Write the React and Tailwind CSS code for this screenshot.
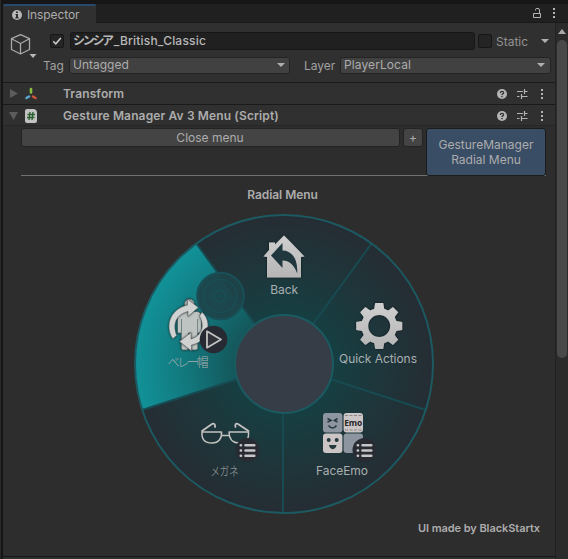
import React from "react";

function Dots() {
  return (
    <svg className="h-3 w-1 shrink-0" viewBox="0 0 4 12" fill="#b4b4b4">
      <rect x="1" y="1" width="2" height="2" />
      <rect x="1" y="5" width="2" height="2" />
      <rect x="1" y="9" width="2" height="2" />
    </svg>
  );
}

function Caret() {
  return (
    <svg className="h-1 w-2 shrink-0" viewBox="0 0 8 4">
      <path d="M0 0H8L4 4Z" fill="#b0b0b0" />
    </svg>
  );
}

function RowTools() {
  return (
    <div className="ml-auto flex items-center pr-[11px]">
      <svg className="size-[10px]" viewBox="0 0 10 10">
        <circle cx="5" cy="5" r="5" fill="#b4b4b4" />
        <path d="M3.4 3.9C3.4 1.9 6.6 1.9 6.6 3.8C6.6 4.9 5 4.8 5 6" fill="none" stroke="#303030" strokeWidth="1.3" />
        <rect x="4.3" y="6.9" width="1.4" height="1.3" fill="#303030" />
      </svg>
      <svg className="ml-[10px] h-[10px] w-[11px]" viewBox="0 0 11 10" fill="none" stroke="#b4b4b4" strokeWidth="1.2">
        <path d="M0 2.5H6M7.5 2.5H10.5M7.5 0V5M0 7.5H2.500M4.500 7.500H10.500M4.500 5V10" />
      </svg>
      <div className="ml-[12px] flex">
        <Dots />
      </div>
    </div>
  );
}

function Radial() {
  return (
    <svg
      className="ml-[130px] block h-[302px] w-[302px]"
      viewBox="133 213 302 302"
      fontFamily='Inter, "Noto Sans CJK JP", sans-serif'
    >
      <defs>
        <radialGradient id="base" gradientUnits="userSpaceOnUse" cx="284" cy="364" r="149">
          <stop offset="0.33" stopColor="#163f42" />
          <stop offset="0.65" stopColor="#1e363b" />
          <stop offset="1" stopColor="#252d33" />
        </radialGradient>
        <radialGradient id="selected" gradientUnits="userSpaceOnUse" cx="284" cy="364" r="149">
          <stop offset="0.33" stopColor="#14575b" />
          <stop offset="0.65" stopColor="#12777c" />
          <stop offset="1" stopColor="#119298" />
        </radialGradient>
        <linearGradient id="metal" x1="0" y1="0" x2="0" y2="1">
          <stop offset="0" stopColor="#d0d0d0" />
          <stop offset="1" stopColor="#b5b5b5" />
        </linearGradient>
        <filter id="shade" x="-20%" y="-20%" width="140%" height="140%">
          <feDropShadow dx="0" dy="0" stdDeviation="1" floodColor="#000" floodOpacity="0.7" />
        </filter>
      </defs>

      <circle cx="284" cy="364" r="149" fill="url(#base)" />
      <path d="M284 364L142.3 410A149 149 0 0 1 196.4 243.5Z" fill="url(#selected)" />
      <g stroke="#174a51" strokeWidth="2">
        <path d="M284 364L371.6 243.5M284 364L425.7 410M283 364V513M284 364L142.3 410M284 364L196.4 243.5" />
      </g>
      <circle cx="284" cy="364" r="149" fill="none" stroke="#1c5961" strokeWidth="2" />
      <circle cx="284" cy="364" r="49" fill="#373d46" stroke="#1a5b62" strokeWidth="2" />

      <g fill="none" stroke="#195058" strokeWidth="2">
        <circle cx="220.5" cy="296" r="23.3" fill="#1d4349" fillOpacity="0.92" />
        <circle cx="220" cy="296" r="16.5" strokeWidth="1.6" strokeOpacity="0.7" />
        <circle cx="219.5" cy="296" r="6" strokeWidth="1.6" />
        <circle cx="219.5" cy="296" r="2.2" fill="#174b51" stroke="none" />
      </g>

      <g filter="url(#shade)">
        <path d="M284 235.5L291 242.5L304.5 256.5L301 257V277.5H267V257L263.5 256.5L269 250V242.5H275V244.5Z" fill="url(#metal)" />
      </g>
      <path d="M271 255.5L282.5 243V250.5C292 250.5 298 259 297.2 273.500C294 264.5 289 260.5 282.5 260.5V268Z" fill="#20383d" />

      <g filter="url(#shade)" transform="translate(379.2 326)">
        <path
          fillRule="evenodd"
          fill="url(#metal)"
          d="M-4 -23H4L5 -17.2L9 -15.5L13.8 -19L19 -13.8L15.5 -9L17.2 -5L23 -4V4L17.2 5L15.5 9L19 13.8L13.8 19L9 15.5L5 17.2L4 23H-4L-5 17.2L-9 15.5L-13.8 19L-19 13.8L-15.5 9L-17.2 5L-23 4V-4L-17.2 -5L-15.5 -9L-19 -13.8L-13.8 -19L-9 -15.5L-5 -17.2ZM0 -11A11 11 0 1 0 0 11A11 11 0 1 0 0 -11Z"
        />
      </g>

      <g strokeLinejoin="round">
        <g filter="url(#shade)" fill="#bdc4c1" stroke="#40585a" strokeWidth="0.7">
          <circle cx="189.500" cy="304" r="5" />
          <path d="M182 311.500H197Q201.500 312 201.500 317V333H197.800V348Q197.800 350 195.500 350H192.500Q190.500 350 190.500 348V333H188.500V348Q188.500 350 186.500 350H183.500Q181.300 350 181.300 348V333H177.500V317Q177.500 312 182 311.500Z" />
        </g>
        <path d="M181.500 319V333M197.600 319V333" stroke="#61716f" strokeWidth="0.8" />
        <g filter="url(#shade)" fill="#d0d1d1" stroke="#454d50" strokeWidth="0.5">
          <path d="M187.500 299L198.300 307.500L188 316.500V311.500C178 314 171.500 322 176.700 335.500L172.800 338.800C165 327 169 309.500 187.500 305Z" />
          <path d="M202 312C208.500 318 210.500 328 204 337C200.500 342 196.500 344 191.500 345V351L179.500 341.500L191 332.500V339C200 336.500 206 328 199.500 316Z" />
        </g>
      </g>
      <circle cx="213.500" cy="339.500" r="13.800" fill="#272a32" />
      <path d="M207 331.300V347.700L221 339.500Z" fill="#303139" stroke="#c3c3c3" strokeWidth="1.800" strokeLinejoin="round" />

      <g fill="none" stroke="#c4c2c0" strokeWidth="2" strokeLinecap="round" strokeLinejoin="round">
        <path d="M202 432H221.500C222 438 219 443 212 443C205 443 201.500 440 202 432ZM229 432H248.500C249 440 246 443 239 443C232 443 229 438 229 432ZM222 435.500H229" strokeWidth="1.500" />
        <path d="M202 431L212 424C214 423 215.500 424.500 215 427M248.500 431L238 424C236 423 234.700 424.500 235.500 427" strokeWidth="1.800" />
      </g>

      <rect x="323" y="413" width="19.400" height="19.400" rx="3" fill="#8c95a0" />
      <rect x="343.600" y="413" width="19.400" height="19.400" rx="3" fill="#cbc6c5" />
      <rect x="323" y="433.500" width="19.400" height="19.400" rx="3" fill="#cbc6c5" />
      <rect x="343.600" y="433.500" width="19.400" height="19.400" rx="3" fill="#8c95a0" />
      <path d="M327.500 418.500L331 420.500L327.500 422M337.500 418.500L334.500 420.500L337.500 422M328.500 425.500Q332.500 430.500 336.500 425.500" fill="none" stroke="#283940" strokeWidth="1.600" />
      <circle cx="328.700" cy="440" r="2" fill="#25383b" />
      <circle cx="336.700" cy="440" r="2" fill="#25383b" />
      <path d="M329 445H336.500C336 450.500 329.500 450.500 329 445Z" fill="#25383b" />
      <path d="M345 415.500H362M345 430H362" stroke="#77777a" strokeWidth="0.800" strokeDasharray="3 1.500" />
      <text x="353.300" y="426" textAnchor="middle" fontSize="8.500" fontWeight="700" fill="#252525" fontFamily='"Open Sans", sans-serif' textLength="18">Emo</text>

      {[[247.500, 450], [364.500, 450]].map(([x, y]) => (
        <g key={x} transform={`translate(${x} ${y})`}>
          <circle r="12" fill="#292b33" />
          <g stroke="#c6c5c7" strokeWidth="2.600" strokeLinecap="round">
            <path d="M-6.700 -4.700H-6.500M-2 -4.700H6.800M-6.700 0.500H-6.500M-2 0.500H6.800M-6.700 5.800H-6.500M-2 5.800H6.800" />
          </g>
        </g>
      ))}

      <g fill="#a9afb0" fontSize="12" textAnchor="middle">
        <text x="284.200" y="294">Back</text>
        <text x="378" y="363" textLength="78">Quick Actions</text>
        <text x="342" y="475" textLength="52">FaceEmo</text>
        <text x="188" y="367" textLength="41" fontWeight="300">ベレー帽</text>
        <text x="224.500" y="476" textLength="28" lengthAdjust="spacingAndGlyphs" fontWeight="300">メガネ</text>
      </g>
    </svg>
  );
}

export default function App() {
  return (
    <div className="flex h-[559px] w-[568px] overflow-hidden border-l border-[#292929] bg-[#161616] pl-[2px] pt-1 font-['Inter','Noto_Sans_CJK_JP',sans-serif] text-xs leading-4 text-[#acacac]">
      <div className="flex min-w-0 flex-1 flex-col">
        <div className="flex h-[19px] shrink-0 bg-[#202020]">
          <div className="flex w-[93px] items-center rounded-t-[2px] border-t-2 border-[#27496d] bg-[#303030] pl-[9px]">
            <svg className="size-[10px]" viewBox="0 0 10 10">
              <circle cx="5" cy="5" r="5" fill="#b8b8b8" />
              <path d="M4 1.500H6V3H4ZM3.500 4H6V7.300H6.700V8.500H3.300V7.300H4V5H3.500Z" fill="#303030" />
            </svg>
            <span className="ml-[5px] tracking-[-0.1px]">Inspector</span>
          </div>
          <div className="flex flex-1 items-center border-b border-[#191919] pr-3">
            <svg className="ml-auto h-[10px] w-[9px]" viewBox="0 0 9 10" fill="none" stroke="#b4b4b4">
              <path d="M0.500 5.500H7.500V9.500H0.500ZM2.500 2.500V1.500Q2.500 0.500 4 0.500H5Q6.500 0.500 6.500 2V5" />
            </svg>
            <div className="ml-[10px] flex"><Dots /></div>
          </div>
        </div>

        <div className="flex min-h-0 flex-1">
          <div className="flex w-[552px] shrink-0 flex-col bg-[#2d2d2d]">
            <div className="flex h-[60px] shrink-0 border-b border-[#1a1a1a] bg-[#303030]">
              <svg className="ml-[7px] mt-[11px] h-[25px] w-[27px] shrink-0" viewBox="0 0 27 25" fill="none" stroke="#a9a9a9" strokeWidth="1.300" strokeLinejoin="round">
                <path d="M10.500 0.700L19.500 4.700V15.500L10.500 20L1.500 15.500V4.700ZM1.500 4.700L10.500 9.500L19.500 4.700M10.500 9.500V20" />
                <path d="M19.500 20H26.500L23 24Z" fill="#b8b8b8" stroke="none" />
              </svg>
              <div className="ml-[6px] flex flex-1 flex-col pt-[9px]">
                <div className="flex h-[18px] items-center">
                  <div className="ml-[7px] flex size-[14px] items-center justify-center rounded-[2px] border border-[#171717] bg-[#252525]">
                    <svg className="size-[10px]" viewBox="0 0 10 10"><path d="M1.200 5.300L3.800 7.800L8.800 2" fill="none" stroke="#cecece" strokeWidth="1.500" /></svg>
                  </div>
                  <div className="ml-[6px] flex h-[18px] w-[405px] items-center rounded-[3px] border border-[#171717] bg-[#202020] pl-[2px] font-medium text-[#b8b8b8]">
                    <span className="text-[12px] font-bold tracking-[-2.3px]">シンシア</span>
                    <span className="ml-[2px] tracking-[0.2px]">_British_Classic</span>
                  </div>
                  <div className="ml-[3px] size-[14px] rounded-[2px] border border-[#171717] bg-[#242424]" />
                  <span className="ml-1 mt-px w-[45px] text-[#929292]">Static</span>
                  <Caret />
                </div>
                <div className="mt-[6px] flex h-[18px] items-center">
                  <span className="mt-[2px] w-[26px] text-[#a0a0a0]">Tag</span>
                  <div className="flex h-[17px] w-[221px] items-center justify-between rounded-[3px] border border-[#242424] bg-[#414141] pl-[3px] pr-1"><span>Untagged</span><Caret /></div>
                  <span className="ml-[14px] mt-[2px] w-[36px] text-[#a0a0a0]">Layer</span>
                  <div className="flex h-[17px] w-[211px] items-center justify-between rounded-[3px] border border-[#242424] bg-[#414141] pl-[3px] pr-[5px]"><span className="tracking-[0.1px]">PlayerLocal</span><Caret /></div>
                </div>
              </div>
            </div>

            <div className="flex h-[22px] shrink-0 items-center border-b border-[#1a1a1a] bg-[#303030] pl-[7px]">
              <svg className="h-[9px] w-2" viewBox="0 0 8 9"><path d="M0 0L8 4.500L0 9Z" fill="#5c5c5c" /></svg>
              <svg className="ml-[6px] size-[14px]" viewBox="0 0 14 14" fill="none" strokeLinecap="round" strokeWidth="2.600">
                <path d="M7 2V5.500" stroke="#87bd3c" /><path d="M2.500 11L5 9.500" stroke="#5aa6d1" /><path d="M9 9.500L11.500 11" stroke="#cc5637" />
              </svg>
              <span className="ml-[25px] font-semibold tracking-[0.130px]">Transform</span>
              <RowTools />
            </div>
            <div className="flex h-[21px] shrink-0 items-center border-b border-[#262626] bg-[#303030] pl-[6px] pt-px">
              <svg className="h-2 w-[9px]" viewBox="0 0 9 8"><path d="M0 0H9L4.500 8Z" fill="#5c5c5c" /></svg>
              <div className="ml-[7px] flex h-[14px] w-3 items-center justify-center rounded-[2px] rounded-tr-[4px] bg-[#c2c2c2]">
                <svg className="size-2" viewBox="0 0 8 8"><path d="M3 0L2 8M6 0L5 8M0.500 2.500H8M0 5.500H7.500" fill="none" stroke="#255d2d" strokeWidth="1.300" /></svg>
              </div>
              <span className="ml-[26px] mt-px font-semibold tracking-[0.130px]">Gesture Manager Av 3 Menu (Script)</span>
              <RowTools />
            </div>

            <div className="flex h-[431px] shrink-0 flex-col border-b border-[#181818]">
              <div className="ml-[18px] flex h-[50px] w-[525px] border-b border-[#707070] pt-[2px]">
                <div className="h-[19px] w-[379px] rounded-[3px] border border-[#232323] bg-[#444] text-center leading-[18px]"><span className="-ml-px">Close menu</span></div>
                <div className="ml-[3px] h-[19px] w-[20px] rounded-[3px] border border-[#232323] bg-[#444] text-center leading-[18px]">+</div>
                <div className="ml-[3px] flex h-[48px] w-[120px] items-center justify-center rounded-[3px] border border-[#1b1b1b] bg-[#394d65] text-center leading-[15px]"><span>GestureManager<br />Radial Menu</span></div>
              </div>
              <div className="mb-[10px] mt-[11px] w-[559px] text-center font-semibold tracking-[-0.05px]">Radial Menu</div>
              <Radial />
              <div className="mr-[15px] mt-[5px] text-right text-[11px] font-semibold tracking-[-0.06px]">UI made by BlackStartx</div>
            </div>
            <div className="flex-1 bg-[#303030]" />
          </div>
          <div className="flex flex-1 flex-col items-center border-l border-[#222] bg-[#2b2b2b] pt-[6px]">
            <svg className="h-[5px] w-2" viewBox="0 0 8 5"><path d="M0 5H8L4 0Z" fill="#a9a9a9" /></svg>
            <div className="mt-[6px] h-[318px] w-[10px] rounded-full bg-[#494949]" />
          </div>
        </div>
      </div>
    </div>
  );
}
